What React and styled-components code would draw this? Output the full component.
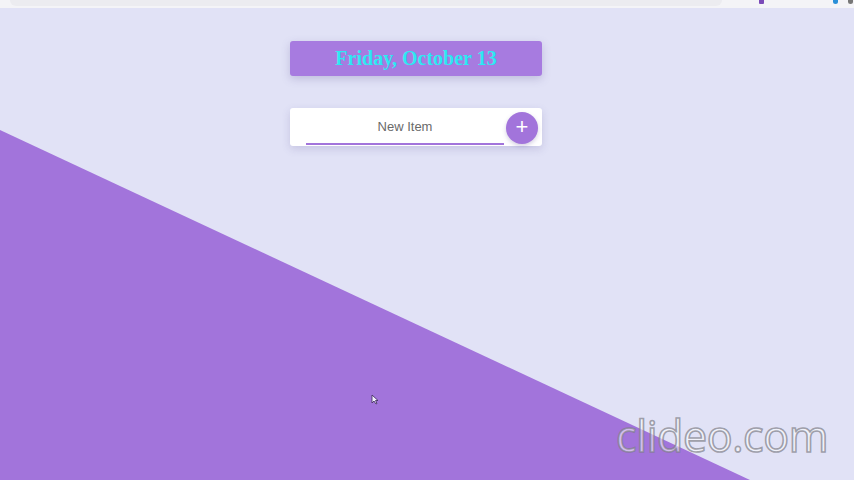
import React from "react";
import styled, { createGlobalStyle } from "styled-components";

const Global = createGlobalStyle`
  html, body { margin: 0; padding: 0; }
  body { background: #e1e2f6; font-family: "Liberation Sans", Arial, sans-serif; overflow: hidden; }
`;

const Page = styled.div`
  position: relative;
  width: 854px;
  height: 480px;
  overflow: hidden;
  background: #e1e2f6;
  &::before {
    content: "";
    position: absolute;
    inset: 0;
    background: #a274db;
    clip-path: polygon(0 130px, 750px 480px, 0 480px);
  }
`;

const Chrome = styled.header`
  position: relative;
  z-index: 1;
  height: 8px;
  background: #f4f4f7;
  display: flex;
  align-items: flex-start;
  padding: 0 1px 0 10px;
`;

const AddressBar = styled.div`
  width: 712px;
  height: 6px;
  background: #ececf0;
  border-radius: 0 0 8px 8px;
`;

const ChromeIcons = styled.div`
  margin-left: auto;
  display: flex;
  gap: 10px;
`;

const ChromeIcon = styled.span`
  display: block;
  width: 5px;
  height: 4px;
  margin-right: ${(p) => p.$after || 0}px;
  background: ${(p) => p.$c};
  border-radius: ${(p) => (p.$round ? "0 0 4px 4px" : "0 0 1px 1px")};
`;

const Content = styled.main`
  position: relative;
  z-index: 1;
  width: 252px;
  margin: 33px 0 0 290px;
  display: flex;
  flex-direction: column;
  gap: 32px;
`;

const DateBox = styled.h1`
  margin: 0;
  height: 35px;
  display: flex;
  align-items: center;
  justify-content: center;
  background: #a77be0;
  border-radius: 3px;
  box-shadow: 0 3px 8px rgba(90, 80, 150, 0.25);
  color: #2ee8f2;
  font-family: "Liberation Serif", "Times New Roman", serif;
  font-weight: bold;
  font-size: 20px;
`;

const Card = styled.form`
  height: 38px;
  background: #ffffff;
  border-radius: 3px;
  box-shadow: 0 3px 8px rgba(90, 80, 150, 0.2);
  display: flex;
  align-items: center;
  padding: 0 4px 0 16px;
  box-sizing: border-box;
`;

const Input = styled.input`
  width: 198px;
  height: 36px;
  border: none;
  border-bottom: 2px solid #a274db;
  outline: none;
  background: transparent;
  text-align: center;
  font-family: "Liberation Sans", Arial, sans-serif;
  font-size: 13px;
  color: #555;
  padding: 0;
  box-sizing: border-box;
  &::placeholder { color: #6a6a6a; }
`;

const AddButton = styled.button`
  margin-left: auto;
  width: 32px;
  height: 32px;
  border-radius: 50%;
  border: none;
  background: #a274db;
  color: #ffffff;
  font-family: "Liberation Sans", Arial, sans-serif;
  font-size: 22px;
  line-height: 1;
  display: flex;
  align-items: center;
  justify-content: center;
  padding: 0 0 2px;
  box-shadow: 0 2px 4px rgba(80, 60, 140, 0.25);
  transform: translateY(1px);
`;

const Watermark = styled.div`
  position: absolute;
  left: 616px;
  top: 406px;
  z-index: 2;
  font-family: "Open Sans", "Noto Sans", sans-serif;
  font-size: 43px;
  font-weight: 400;
  letter-spacing: -0.4px;
  color: rgba(255, 255, 255, 0.55);
  -webkit-text-stroke: 1.6px rgba(125, 125, 135, 0.7);
`;

const Cursor = styled.svg`
  position: absolute;
  left: 371px;
  top: 394px;
  z-index: 2;
`;

export default function App() {
  return (
    <>
      <Global />
      <Page>
        <Chrome>
          <AddressBar />
          <ChromeIcons>
            <ChromeIcon $c="#7b4bb8" $after={59} />
            <ChromeIcon $c="#2a8fd8" $round />
            <ChromeIcon $c="#777" $round />
          </ChromeIcons>
        </Chrome>
        <Content>
          <DateBox>Friday, October 13</DateBox>
          <Card onSubmit={(e) => e.preventDefault()}>
            <Input placeholder="New Item" />
            <AddButton type="submit">+</AddButton>
          </Card>
        </Content>
        <Watermark>clideo.com</Watermark>
        <Cursor width="8" height="11" viewBox="0 0 8 11">
          <path d="M1 1 L1 9 L3 7 L5 10 L6 9.5 L4.5 6.5 L7 6.5 Z" fill="#f4f0ff" stroke="#3a2a55" strokeWidth="0.8" />
        </Cursor>
      </Page>
    </>
  );
}
